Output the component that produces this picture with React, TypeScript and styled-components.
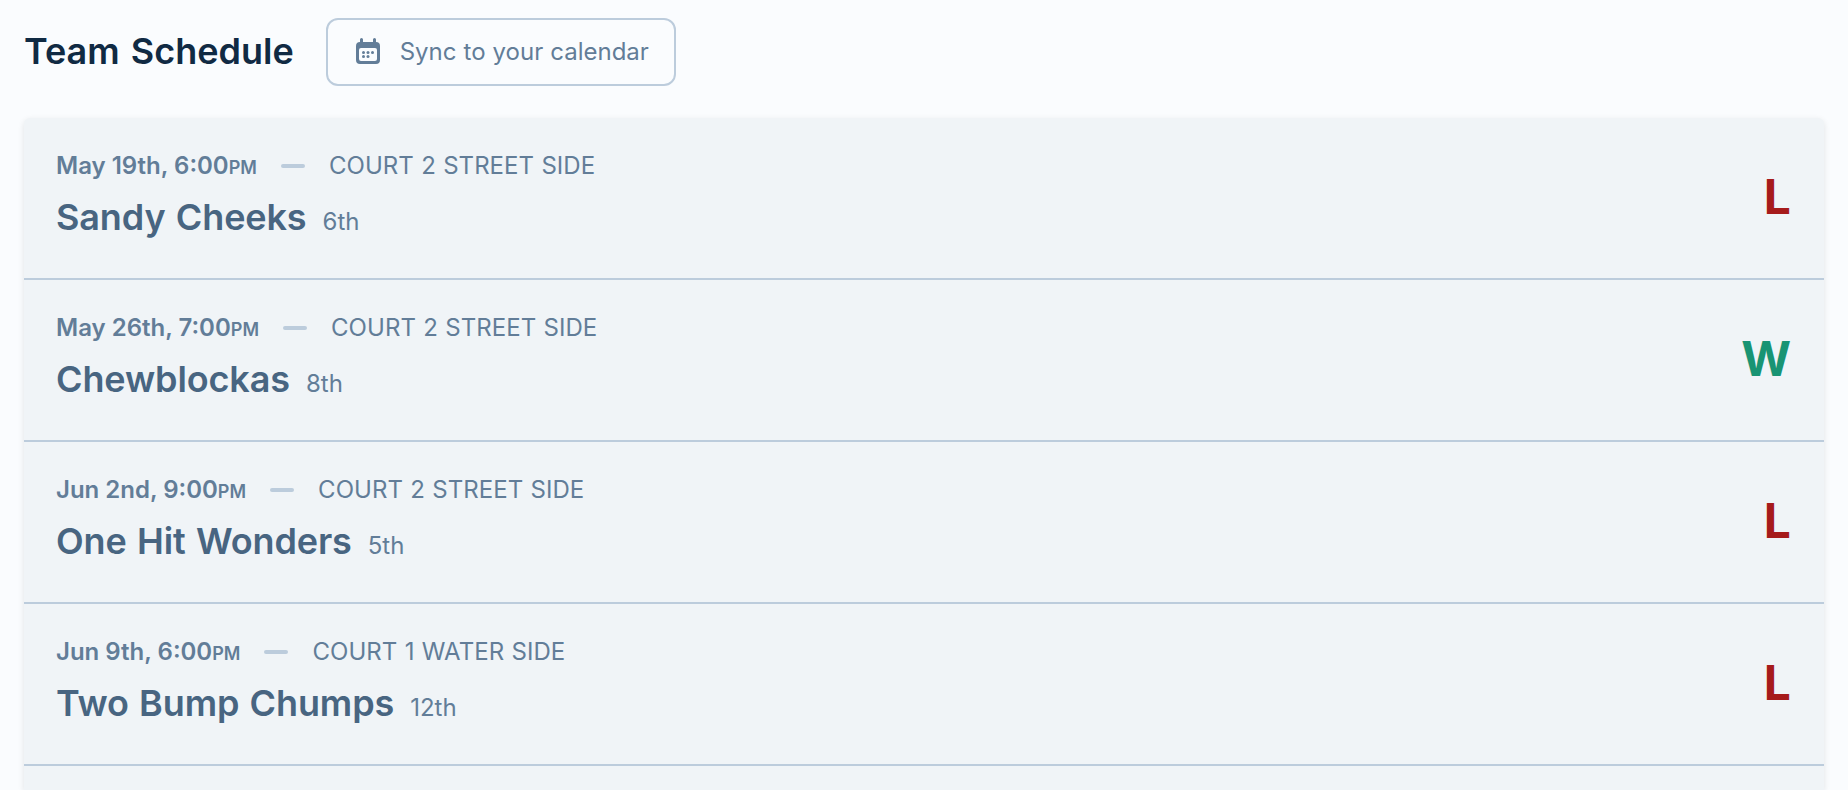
import React from "react";
import styled, { createGlobalStyle } from "styled-components";

type Game = {
  date: string;
  time: string;
  court: string;
  opponent: string;
  place: string;
  result: "W" | "L";
};

const games: Game[] = [
  { date: "May 19th", time: "6:00", court: "Court 2 Street Side", opponent: "Sandy Cheeks", place: "6th", result: "L" },
  { date: "May 26th", time: "7:00", court: "Court 2 Street Side", opponent: "Chewblockas", place: "8th", result: "W" },
  { date: "Jun 2nd", time: "9:00", court: "Court 2 Street Side", opponent: "One Hit Wonders", place: "5th", result: "L" },
  { date: "Jun 9th", time: "6:00", court: "Court 1 Water Side", opponent: "Two Bump Chumps", place: "12th", result: "L" },
];

const CalendarIcon = () => (
  <svg width="24" height="26" viewBox="0 0 24 26" fill="currentColor">
    <path
      fillRule="evenodd"
      d="M5.5 0A1.5 1.5 0 0 1 7 1.5V4h10V1.5a1.5 1.5 0 0 1 3 0V4a4 4 0 0 1 4 4v14a4 4 0 0 1-4 4H4a4 4 0 0 1-4-4V8a4 4 0 0 1 4-4V1.5A1.5 1.5 0 0 1 5.5 0ZM5 10a2 2 0 0 0-2 2v9a2 2 0 0 0 2 2h14a2 2 0 0 0 2-2v-9a2 2 0 0 0-2-2Z"
    />
    <circle cx="7.5" cy="14.5" r="1.5" />
    <circle cx="12" cy="14.5" r="1.5" />
    <circle cx="16.5" cy="14.5" r="1.5" />
    <circle cx="7.5" cy="18.6" r="1.5" />
    <circle cx="12" cy="18.6" r="1.5" />
  </svg>
);

const App = () => (
  <>
    <GlobalStyle />
    <Page>
      <Header>
        <Title>Team Schedule</Title>
        <SyncButton>
          <CalendarIcon />
          <SyncLabel>Sync to your calendar</SyncLabel>
        </SyncButton>
      </Header>
      <Card>
        {games.map((game) => (
          <Row key={game.date}>
            <div>
              <Meta>
                <DateTime>
                  {game.date}, {game.time}
                  <Period>PM</Period>
                </DateTime>
                <Dash />
                <Court>{game.court}</Court>
              </Meta>
              <Matchup>
                <Opponent>{game.opponent}</Opponent>
                <Place>{game.place}</Place>
              </Matchup>
            </div>
            <Result $won={game.result === "W"}>{game.result}</Result>
          </Row>
        ))}
      </Card>
    </Page>
  </>
);

const GlobalStyle = createGlobalStyle`
  * {
    box-sizing: border-box;
  }

  body {
    margin: 0;
    overflow: hidden;
    background: #fafcfe;
    font-family: Inter, "Liberation Sans", sans-serif;
  }
`;

const Page = styled.main`
  height: 790px;
  padding: 18px 24px 0;
  display: flex;
  flex-direction: column;
  gap: 32px;
  overflow: hidden;
`;

const Header = styled.header`
  height: 68px;
  flex-shrink: 0;
  display: flex;
  align-items: center;
  gap: 32px;
`;

const Title = styled.h1`
  margin: 0;
  padding-bottom: 2px;
  font-size: 36px;
  font-weight: 600;
  line-height: 48px;
  word-spacing: 2px;
  color: #102a43;
`;

const SyncButton = styled.button`
  width: 350px;
  height: 68px;
  padding: 0 0 2px 28px;
  display: flex;
  align-items: center;
  gap: 20px;
  border: 2px solid #bcccdc;
  border-radius: 12px;
  background: transparent;
  color: #627d98;
  font-family: inherit;
  font-size: 24px;
  white-space: nowrap;
`;

const SyncLabel = styled.span`
  margin-top: 2px;
  line-height: 32px;
  word-spacing: 0.3px;
`;

const Card = styled.section`
  flex: 1;
  border-radius: 6px 6px 0 0;
  background: #f0f4f7;
  box-shadow: 0 2px 6px rgba(0, 0, 0, 0.1);
`;

const Row = styled.article`
  height: 162px;
  padding: 32px 33px 0 32px;
  display: flex;
  justify-content: space-between;
  border-bottom: 2px solid #bcccdc;
`;

const Meta = styled.div`
  height: 32px;
  display: flex;
  align-items: center;
  gap: 24px;
  color: #627d98;
  font-size: 24px;
  line-height: 32px;
`;

const DateTime = styled.span`
  font-weight: 600;
`;

const Period = styled.span`
  font-size: 18px;
  line-height: 1;
`;

const Dash = styled.span`
  width: 24px;
  height: 4px;
  border-radius: 2px;
  background: #bcccdc;
`;

const Court = styled.span`
  text-transform: uppercase;
  letter-spacing: 0.05px;
  word-spacing: 0.5px;
`;

const Matchup = styled.div`
  margin-top: 11px;
  display: flex;
  align-items: baseline;
  gap: 16px;
`;

const Opponent = styled.h2`
  margin: 0;
  font-size: 36px;
  font-weight: 600;
  line-height: 48px;
  letter-spacing: -0.12px;
  word-spacing: 1.4px;
  color: #486581;
`;

const Place = styled.span`
  font-size: 24px;
  color: #627d98;
`;

const Result = styled.strong<{ $won: boolean }>`
  margin-top: 17px;
  font-size: 48px;
  font-weight: 700;
  line-height: 60px;
  color: ${({ $won }) => ($won ? "#199473" : "#a61b1b")};
`;

export default App;
